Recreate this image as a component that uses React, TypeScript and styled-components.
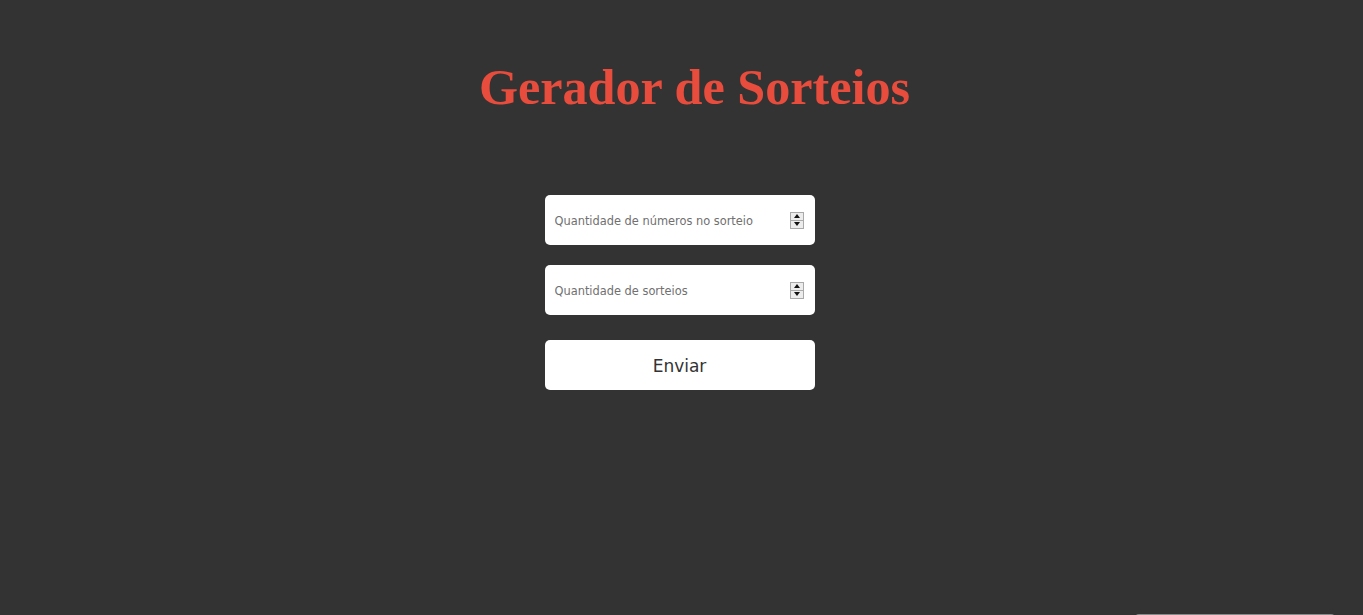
import React from "react";
import styled, { createGlobalStyle } from "styled-components";

const GlobalStyle = createGlobalStyle`
  html, body {
    margin: 0;
    padding: 0;
    background: #333333;
  }
  body {
    font-family: "DejaVu Sans", Verdana, sans-serif;
    overflow: hidden;
  }
`;

const Page = styled.main`
  min-height: 615px;
  display: flex;
  flex-direction: column;
  align-items: center;
  padding: 58px 4px 0 0;
  box-sizing: border-box;
`;

const Title = styled.h1`
  margin: 0 0 79px;
  padding-left: 30px;
  font-family: "Liberation Serif", "Times New Roman", serif;
  font-weight: 700;
  font-size: 50.2px;
  line-height: normal;
  color: #e74c3c;
`;

const Form = styled.form`
  display: flex;
  flex-direction: column;
  width: 270px;
  gap: 20px;
`;

const Field = styled.label`
  display: flex;
  align-items: center;
  height: 50px;
  background: #ffffff;
  border-radius: 5px;
  padding: 0 11px 0 10px;
  box-sizing: border-box;
`;

const NumberInput = styled.input`
  flex: 1;
  min-width: 0;
  border: none;
  outline: none;
  background: transparent;
  padding: 2px 0 0;
  font-family: "DejaVu Sans", Verdana, sans-serif;
  font-size: 11.4px;
  color: #333;
  &::placeholder {
    color: #707070;
  }
  &::-webkit-inner-spin-button,
  &::-webkit-outer-spin-button {
    -webkit-appearance: none;
    margin: 0;
  }
  -moz-appearance: textfield;
`;

const Spinner = styled.span`
  display: flex;
  flex-direction: column;
  width: 14px;
  height: 17px;
  box-sizing: border-box;
  border: 1px solid #a9a9a9;
  background: #e9e9e9;
`;

const SpinHalf = styled.span<{ $down?: boolean }>`
  flex: 1;
  display: flex;
  align-items: center;
  justify-content: center;
  background: #ececec;
  border-top: ${(p) => (p.$down ? "1px solid #a9a9a9" : "none")};
`;

const Arrow = ({ down }: { down?: boolean }) => (
  <svg width="6" height="4" viewBox="0 0 6 4">
    {down ? (
      <polygon points="0,0 6,0 3,4" fill="#111" />
    ) : (
      <polygon points="0,4 6,4 3,0" fill="#111" />
    )}
  </svg>
);

const SubmitButton = styled.button`
  margin-top: 5px;
  height: 50px;
  border: none;
  border-radius: 5px;
  background: #ffffff;
  color: #333333;
  padding: 2px 0 0;
  font-family: "DejaVu Sans", Verdana, sans-serif;
  font-size: 17px;
  cursor: pointer;
`;

const Peek = styled.div`
  position: fixed;
  left: 1135px;
  top: 614px;
  width: 200px;
  height: 40px;
  border-radius: 4px;
  background: #8a8a8a;
`;

function NumberField({ placeholder }: { placeholder: string }) {
  return (
    <Field>
      <NumberInput type="number" placeholder={placeholder} />
      <Spinner>
        <SpinHalf>
          <Arrow />
        </SpinHalf>
        <SpinHalf $down>
          <Arrow down />
        </SpinHalf>
      </Spinner>
    </Field>
  );
}

export default function App() {
  return (
    <>
      <GlobalStyle />
      <Page>
        <Title>Gerador de Sorteios</Title>
        <Form onSubmit={(e) => e.preventDefault()}>
          <NumberField placeholder="Quantidade de números no sorteio" />
          <NumberField placeholder="Quantidade de sorteios" />
          <SubmitButton type="submit">Enviar</SubmitButton>
        </Form>
      </Page>
      <Peek />
    </>
  );
}
